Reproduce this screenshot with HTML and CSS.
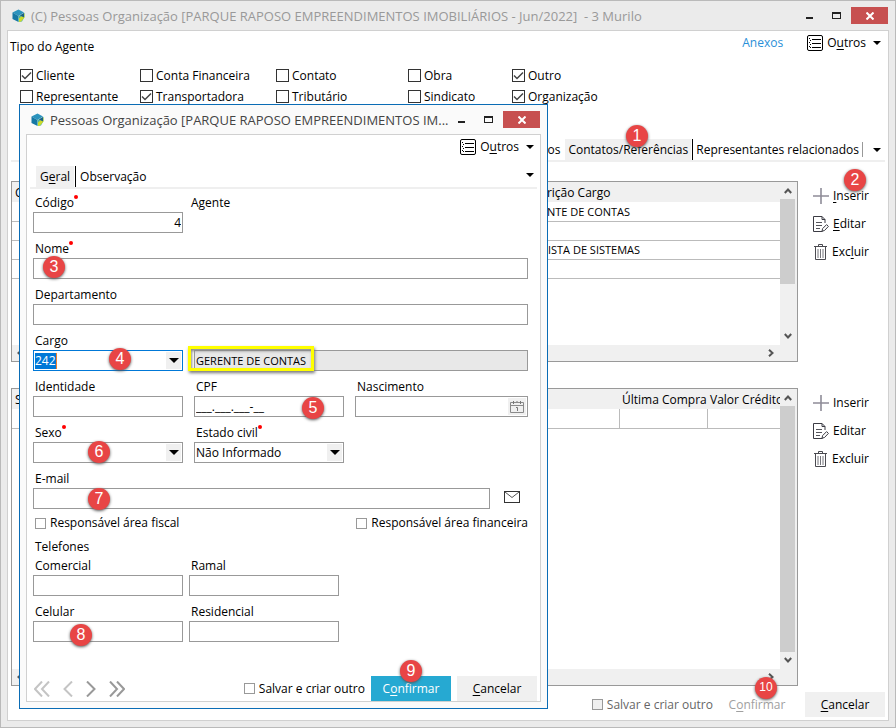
FILE: index.html
```
<!DOCTYPE html>
<html lang="pt-BR">
<head>
<meta charset="utf-8">
<title>Pessoas Organização</title>
<link rel="stylesheet" href="styles.css">
</head>
<body>
<svg class="defs" aria-hidden="true">
  <symbol id="logo" viewBox="0 0 13 14">
    <path d="M6.500 0.500 12 3.500 6.500 7 0.500 3.500z" fill="#2b93bd"/>
    <path d="M0.500 3.500 6.500 7V13L0.500 10z" fill="#1678a4"/>
    <path d="M12.500 3.800V8L10 12.500 6.500 13V7z" fill="#4fb3a0"/>
    <path d="M12.500 4.500V8.500L9 12.500 7 13V9.500z" fill="#cddc29"/>
    <path d="M8 6.500 12 4V8.500z" fill="#1c5f86"/>
  </symbol>
  <symbol id="list" viewBox="0 0 16 16">
    <rect x="0.500" y="0.500" width="15" height="15" rx="1.500" fill="none" stroke="#000"/>
    <path d="M5 4.500h9M5 8.500h9M5 12.500h9M2 3.500h1M2 7.500h1M2 11.500h1M3 5.500h1M3 9.500h1M3 12.500h1" stroke="#000" fill="none"/>
  </symbol>
  <symbol id="plus" viewBox="0 0 16 16">
    <path d="M8 0v16M0 8h16" stroke="#8e8c98" stroke-width="1.600" fill="none"/>
  </symbol>
  <symbol id="edit" viewBox="0 0 16 16">
    <path d="M9.500 15.500H0.500V0.500H9L12 3.500V7M9 0.500V3.500H12" stroke="#3c3c44" fill="none"/>
    <path d="M3 6.500h6M3 9.500h6M3 12.500h4" stroke="#55555c" fill="none"/>
    <path d="M9 15.200 9.600 12.600 13.600 8.600 15.400 10.400 11.500 14.500z" stroke="#3c3c44" fill="#fff"/>
  </symbol>
  <symbol id="trash" viewBox="0 0 13 16">
    <path d="M0 2.500h13M4.500 2V0.500h4V2M1.500 3V15.500h10V3" stroke="#4a4a50" fill="none"/>
    <path d="M4 5v9M6.500 5v9M9 5v9" stroke="#77777d" fill="none"/>
  </symbol>
  <symbol id="chev" viewBox="0 0 8 6">
    <path d="M0.800 5 4 1.500 7.200 5" stroke="#555" stroke-width="2" fill="none"/>
  </symbol>
  <symbol id="next" viewBox="0 0 10 16">
    <path d="M1 0.500 8.500 8 1 15.500" stroke="currentColor" stroke-width="2" fill="none"/>
  </symbol>
  <symbol id="last" viewBox="0 0 16 16">
    <path d="M1 0.500 8 8 1 15.500M8 0.500 15 8 8 15.500" stroke="currentColor" stroke-width="2" fill="none"/>
  </symbol>
  <symbol id="calendar" viewBox="0 0 14 12">
    <path d="M0.500 1.500h13v10H0.500zM0.500 4.500h13" stroke="#8a8a8a" fill="none"/>
    <path d="M3.500 0v3M7 0v1M10.500 0v3M6 6.500h1.500V10" stroke="#777" fill="none"/>
  </symbol>
  <symbol id="mail" viewBox="0 0 16 12">
    <rect x="0.500" y="0.500" width="15" height="11" fill="none" stroke="#333"/>
    <path d="M1 1 8 6.500 15 1" stroke="#555" fill="none"/>
  </symbol>
</svg>

<main class="window">
  <header class="titlebar">
    <svg class="logo"><use href="#logo"/></svg>
    <h1 class="title">(C) Pessoas Organização [PARQUE RAPOSO EMPREENDIMENTOS IMOBILIÁRIOS - Jun/2022] &nbsp;- 3 Murilo</h1>
    <div class="winbtns">
      <button class="min" aria-label="Minimizar"></button>
      <button class="max" aria-label="Maximizar"></button>
      <button class="close" aria-label="Fechar"><svg viewBox="0 0 8 8"><path d="M0.500 0.500 7.500 7.500M7.500 0.500 0.500 7.500"/></svg></button>
    </div>
  </header>

  <div class="content">
    <div class="toprow">
      <h2 class="group">Tipo do Agente</h2>
      <a class="anexos" href="#">Anexos</a>
      <button class="outros"><svg><use href="#list"/></svg><span>O<u>u</u>tros</span><i class="caret"></i></button>
    </div>

    <div class="types">
      <label><input type="checkbox" checked>Cliente</label>
      <label><input type="checkbox">Conta Financeira</label>
      <label><input type="checkbox">Contato</label>
      <label><input type="checkbox">Obra</label>
      <label><input type="checkbox" checked>Outro</label>
      <label><input type="checkbox">Representante</label>
      <label><input type="checkbox" checked>Transportadora</label>
      <label><input type="checkbox">Tributário</label>
      <label><input type="checkbox">Sindicato</label>
      <label><input type="checkbox" checked>Organização</label>
    </div>

    <nav class="tabs tabs-main">
      <button class="tab">os</button>
      <button class="tab active">Contatos/Referências</button>
      <button class="tab">Representantes relacionados</button>
      <span class="sep"></span>
      <i class="caret"></i>
    </nav>

    <section class="block block-contacts">
      <div class="grid-box">
        <div class="grid-view">
          <table>
            <colgroup><col class="c-code"><col></colgroup>
            <thead><tr><th>C</th><th>Descrição Cargo</th></tr></thead>
            <tbody>
              <tr><td></td><td>GERENTE DE CONTAS</td></tr>
              <tr><td></td><td></td></tr>
              <tr><td></td><td>ANALISTA DE SISTEMAS</td></tr>
              <tr><td></td><td></td></tr>
            </tbody>
          </table>
        </div>
        <div class="vbar"><svg><use href="#chev"/></svg><span class="thumb short"></span><svg class="down"><use href="#chev"/></svg></div>
        <div class="hbar"><svg class="left"><use href="#chev"/></svg><svg class="right"><use href="#chev"/></svg></div>
      </div>
      <div class="actions">
        <button><svg class="i16"><use href="#plus"/></svg><span><u>I</u>nserir</span></button>
        <button><svg class="i16"><use href="#edit"/></svg><span><u>E</u>ditar</span></button>
        <button><svg class="i13"><use href="#trash"/></svg><span>Exc<u>l</u>uir</span></button>
      </div>
    </section>

    <section class="block block-refs">
      <div class="grid-box">
        <div class="grid-view">
          <table class="lined">
            <colgroup><col class="c-rest"><col class="c-date"><col></colgroup>
            <thead><tr><th>S</th><th>Última Compra</th><th>Valor Crédito</th></tr></thead>
            <tbody><tr><td></td><td></td><td></td></tr></tbody>
          </table>
        </div>
        <div class="vbar"><svg><use href="#chev"/></svg><span class="thumb"></span><svg class="down"><use href="#chev"/></svg></div>
        <div class="hbar"><svg class="left"><use href="#chev"/></svg><svg class="right"><use href="#chev"/></svg></div>
      </div>
      <div class="actions">
        <button><svg class="i16"><use href="#plus"/></svg><span>Inserir</span></button>
        <button><svg class="i16"><use href="#edit"/></svg><span>Editar</span></button>
        <button><svg class="i13"><use href="#trash"/></svg><span>Excluir</span></button>
      </div>
    </section>

    <footer class="foot">
      <label class="small dim"><input type="checkbox" disabled>Salvar e criar outro</label>
      <button class="btn flat" disabled>C<u>o</u>nfirmar</button>
      <button class="btn"><u>C</u>ancelar</button>
    </footer>
  </div>
  <span class="mark m1">1</span>
  <span class="mark m2">2</span>
  <span class="mark m10">10</span>
</main>

<div class="dialog" role="dialog" aria-labelledby="dlg-title">
  <header class="titlebar">
    <svg class="logo"><use href="#logo"/></svg>
    <h2 class="title" id="dlg-title">Pessoas Organização [PARQUE RAPOSO EMPREENDIMENTOS IM...</h2>
    <div class="winbtns">
      <button class="min" aria-label="Minimizar"></button>
      <button class="max" aria-label="Maximizar"></button>
      <button class="close" aria-label="Fechar"><svg viewBox="0 0 8 8"><path d="M0.500 0.500 7.500 7.500M7.500 0.500 0.500 7.500"/></svg></button>
    </div>
  </header>
  <form class="content">
    <div class="toprow">
      <button type="button" class="outros"><svg><use href="#list"/></svg><span>O<u>u</u>tros</span><i class="caret"></i></button>
    </div>
    <nav class="tabs">
      <button type="button" class="tab active">G<u>e</u>ral</button>
      <button type="button" class="tab">Observação</button>
      <i class="caret"></i>
    </nav>

    <div class="fields">
      <div class="row">
        <div class="field"><label class="req" for="codigo">Código</label><input id="codigo" class="num" value="4"></div>
        <div class="agent">Agente</div>
      </div>
      <div class="field"><label class="req" for="nome">Nome</label><input id="nome"></div>
      <div class="field"><label for="depto">Departamento</label><input id="depto"></div>
      <div class="row">
        <div class="field"><label for="cargo">Cargo</label>
          <div class="combo focus"><span class="picked">242</span><input id="cargo" aria-label="Cargo"><button type="button" aria-label="Abrir lista"><i class="caret"></i></button></div>
        </div>
        <div class="field wide2 cargo-desc"><input class="ro" aria-label="Descrição do cargo" value="GERENTE DE CONTAS" readonly><span class="hl"></span></div>
      </div>
      <div class="row">
        <div class="field"><label for="ident">Identidade</label><input id="ident"></div>
        <div class="field"><label for="cpf">CPF</label><input id="cpf" value="___.___.___-__"></div>
        <div class="field"><label for="nasc">Nascimento</label>
          <div class="combo"><input id="nasc"><button type="button" class="cal" aria-label="Calendário"><svg><use href="#calendar"/></svg></button></div>
        </div>
      </div>
      <div class="row">
        <div class="field"><label class="req" for="sexo">Sexo</label><div class="combo"><select id="sexo"><option></option></select><span class="drop"><i class="caret"></i></span></div></div>
        <div class="field"><label class="req" for="civil">Estado civil</label><div class="combo"><select id="civil"><option>Não Informado</option></select><span class="drop"><i class="caret"></i></span></div></div>
      </div>
      <div class="mailrow">
        <div class="field"><label for="email">E-mail</label><input id="email"></div>
        <button type="button" class="mail" aria-label="Enviar e-mail"><svg><use href="#mail"/></svg></button>
      </div>
      <div class="resp">
        <label class="small"><input type="checkbox">Responsável área fiscal</label>
        <label class="small"><input type="checkbox">Responsável área financeira</label>
      </div>
      <h3 class="phones">Telefones</h3>
      <div class="phone-grid">
        <div class="field"><label for="com">Comercial</label><input id="com"></div>
        <div class="field"><label for="ramal">Ramal</label><input id="ramal"></div>
        <div class="field"><label for="cel">Celular</label><input id="cel"></div>
        <div class="field"><label for="res">Residencial</label><input id="res"></div>
      </div>
    </div>

    <footer class="foot">
      <div class="nav">
        <button type="button" aria-label="Primeiro" class="off"><svg class="i16 flip"><use href="#last"/></svg></button>
        <button type="button" aria-label="Anterior" class="off"><svg class="i10 flip"><use href="#next"/></svg></button>
        <button type="button" aria-label="Próximo"><svg class="i10"><use href="#next"/></svg></button>
        <button type="button" aria-label="Último"><svg class="i16"><use href="#last"/></svg></button>
      </div>
      <label class="small"><input type="checkbox">Salvar e criar outro</label>
      <button type="button" class="btn primary">C<u>o</u>nfirmar</button>
      <button type="button" class="btn"><u>C</u>ancelar</button>
    </footer>
  </form>
  <span class="mark m3">3</span>
  <span class="mark m4">4</span>
  <span class="mark m5">5</span>
  <span class="mark m6">6</span>
  <span class="mark m7">7</span>
  <span class="mark m8">8</span>
  <span class="mark m9">9</span>
</div>
</body>
</html>
```
FILE: styles.css
```
* { box-sizing: border-box; }
body {
  margin: 0;
  position: relative;
  font: 12px/16px "Open Sans", "Noto Sans", sans-serif;
  color: #000;
}
.defs { position: absolute; width: 0; height: 0; }
svg { display: block; flex: none; }
button, input, select { font: inherit; color: inherit; margin: 0; padding: 0; border: 0; background: none; border-radius: 0; }
h1, h2, h3 { margin: 0; font: inherit; }
u { text-decoration: underline; text-underline-offset: 2px; }
.i16 { width: 16px; height: 16px; }
.i13 { width: 13px; height: 16px; }
.i10 { width: 10px; height: 16px; }

/* Window frames */
.window {
  position: relative;
  display: flex;
  flex-direction: column;
  min-height: 100vh;
  border: 1px solid #bababa;
  background: #ebebeb;
  padding: 0 6px 6px;
}
.titlebar { display: flex; align-items: center; height: 29px; flex: none; }
.logo { width: 13px; height: 14px; margin: 0 6px 0 5px; }
.title { font-size: 13px; color: #999; white-space: nowrap; flex: 1; min-width: 0; overflow: hidden; }
.winbtns { display: flex; align-items: center; margin-right: 1px; }
.winbtns .min { width: 7px; height: 2px; background: #222; margin: 5px 19px 0 0; }
.winbtns .max { width: 9px; height: 7px; border: 1px solid #222; border-top-width: 2px; margin-right: 10px; }
.winbtns .close { width: 37px; height: 17px; background: #c75050; display: grid; place-items: center; }
.close svg { width: 8px; height: 8px; stroke: #fff; stroke-width: 2; }
.content {
  flex: 1;
  display: flex;
  flex-direction: column;
  background: #fff;
  border: 1px solid #d0d0d0;
}

.toprow { display: flex; height: 34px; padding: 0 7px 0 2px; flex: none; }
.group { flex: 1; padding-top: 8px; }
.anexos { color: #2a8fd8; text-decoration: none; padding-top: 4px; margin-right: 24px; }
.outros { display: flex; align-items: center; height: 24px; }
.outros svg { width: 16px; height: 16px; margin-right: 4px; }
.outros .caret { margin-left: 7px; }
.caret { display: block; flex: none; width: 0; border: 4px solid transparent; border-top-color: #000; border-bottom: 0; }

/* Check boxes */
input[type="checkbox"] { appearance: none; flex: none; width: 13px; height: 13px; border: 1px solid #333; background: #fff; margin-right: 3px; }
input[type="checkbox"]:checked {
  background: #fff url("data:image/svg+xml,%3Csvg xmlns='http://www.w3.org/2000/svg' viewBox='0 0 11 11'%3E%3Cpath d='M1 5.500 4 8.500 10 2.500' fill='none' stroke='%23444' stroke-width='1.500'/%3E%3C/svg%3E") center / 11px 11px no-repeat;
}
.types { display: grid; grid-template-columns: 120px 136px 132px 104px 1fr; grid-auto-rows: 21px; padding-left: 12px; }
.types label { display: flex; align-items: center; }
.small { display: flex; align-items: center; }
.small input[type="checkbox"] { width: 11px; height: 11px; border-color: #999; margin-right: 4px; }
.dim { color: #666; }
.dim input[type="checkbox"] { background: #f0f0f0; }

/* Tabs */
.tabs { display: flex; align-items: stretch; height: 23px; border-bottom: 2px solid #efefef; margin: 0 3px; flex: none; }
.tab { padding: 0 4px; }
.tab.active { background: #f0f0f0; box-shadow: 1px 0 #fff, 2px 0 #000; margin-right: 2px; }
.tabs .caret { align-self: center; margin-left: auto; }
.tabs-main { margin-top: 32px; justify-content: flex-end; }
.tabs-main .tab { padding: 0 3px; }
.tabs-main .sep { width: 1px; margin: 3px 10px 3px 0; background: #999; }
.tabs-main .caret { margin: 0 4px 0 0; }
.tabs-main .active { margin-left: 2px; }

/* Record grids */
.block { display: flex; margin-left: 3px; }
.block-contacts { margin-top: 19px; height: 181px; }
.block-refs { margin-top: 26px; flex: 1; min-height: 200px; }
.grid-box {
  flex: 1;
  min-width: 0;
  display: grid;
  grid-template: "view vbar" 1fr "hbar corner" 16px / 1fr 17px;
  border: 1px solid #999;
  background: #f0f0f0;
}
.grid-view { background: #fff; overflow: hidden; }
table { table-layout: fixed; width: 100%; border-collapse: collapse; }
th, td { height: 19px; padding: 0 3px; text-align: left; font: inherit; line-height: 17px; white-space: nowrap; border-bottom: 1px solid #bbb; }
td { font-size: 11px; }
th { background: #f0f0f0; border: 0; height: 20px; }
.c-code { width: 505px; }
.c-rest { width: 607px; }
.c-date { width: 88px; }
.lined td + td { border-left: 1px solid #bbb; }
.vbar { display: flex; flex-direction: column; align-items: center; padding: 6px 2px 6px 0; gap: 5px; }
.vbar svg, .hbar svg { width: 8px; height: 6px; }
.vbar .down { transform: rotate(180deg); margin-top: auto; }
.thumb { width: 15px; background: #cdcdcd; flex: 1; }
.thumb.short { flex: 0 0 85px; }
.hbar { grid-area: hbar; display: flex; justify-content: space-between; align-items: center; padding: 0 5px 0 4px; }
.hbar .left { transform: rotate(-90deg); }
.hbar .right { transform: rotate(90deg); }
.actions { width: 90px; padding: 1px 0 0 15px; display: flex; flex-direction: column; flex: none; }
.actions button { display: flex; align-items: center; gap: 4px; height: 28px; }
.actions .i13 { margin: 0 1px; }

/* Footers */
.foot { display: flex; align-items: center; justify-content: flex-end; gap: 6px; padding: 6px 3px 3px 0; flex: none; }
.btn { width: 80px; height: 25px; background: #f0f0f0; flex: none; }
.btn.flat { background: none; color: #a0a0a0; width: 76px; margin-right: 4px; }
.btn.primary { background: #26a9d2; color: #fff; }

/* Dialog over the main window */
.dialog {
  position: absolute;
  left: 19px;
  right: 348px;
  top: 104px;
  bottom: 19px;
  display: flex;
  flex-direction: column;
  border: 1px solid #0a6cb5;
  background: #fafafa;
  padding: 0 6px 6px;
}
.dialog .title { color: #444; }
.dialog .toprow { justify-content: flex-end; height: 31px; padding-right: 6px; }
.dialog .caret { margin-right: 0; }
.dialog .tabs { padding: 0 3px 0 6px; }
.dialog .tabs .caret { margin-bottom: 4px; }
.dialog .foot { padding: 0 3px 0 7px; }
.fields { display: flex; flex-direction: column; gap: 8px; padding: 6px 12px 0 6px; flex: 1; }
.row { display: grid; grid-template-columns: 150px 150px 1fr; column-gap: 11px; align-items: end; }
.field { display: flex; flex-direction: column; gap: 1px; min-width: 0; position: relative; }
.field label { padding-left: 2px; align-self: flex-start; }
.field > input, .combo { width: 100%; height: 21px; border: 1px solid #999; background: #fff; padding: 0 1px; }
.req::after { content: ""; display: inline-block; width: 4px; height: 4px; border-radius: 2px; background: #f00; vertical-align: 8px; }
.num { text-align: right; }
.agent { align-self: start; margin-left: -3px; }
.wide2 { grid-column: span 2; }
.field > input.ro { background: #e8e8e8; font-size: 11px; }
.hl { position: absolute; left: -6px; top: -4px; width: 126px; height: 25px; border: 3px solid #ff0; box-shadow: 1px 2px 3px #777, inset 1px 2px 3px #888; }
.combo { display: flex; align-items: center; }
.combo input, .combo select { flex: 1; min-width: 0; height: 19px; appearance: none; outline: 0; }
.combo button, .drop { width: 15px; height: 17px; background: #f0f0f0; display: grid; place-items: center; flex: none; }
.combo .caret, .drop .caret { border-width: 5px 5px 0; }
.combo .cal { width: 18px; }
.cal svg { width: 14px; height: 12px; }
.focus { border-color: #0078d7; }
.picked { background: #0078d7; color: #fff; border-right: 1px solid #f08030; }
.mailrow { display: grid; grid-template-columns: 1fr 38px; align-items: end; }
.mail { height: 24px; justify-self: center; margin-left: 6px; }
.mail svg { width: 16px; height: 12px; }
.resp { display: flex; justify-content: space-between; padding-left: 2px; margin: -2px 0; }
.phones { padding-left: 2px; margin: 2px 0 -5px; }
.phone-grid { display: grid; grid-template-columns: 150px 150px; gap: 8px 6px; }
.nav { display: flex; gap: 13px; margin-right: auto; }
.nav button { color: #999; }
.nav .off { color: #c4c4c4; }
.flip { transform: scaleX(-1); }

/* Numbered call-outs */
.mark {
  position: absolute;
  width: 22px;
  height: 22px;
  border-radius: 50%;
  background: #e84545;
  color: #fff;
  font: 16px/21px "Liberation Sans", sans-serif;
  text-align: center;
  box-shadow: 0 1px 3px #555;
}
.m1 { left: 625px; top: 124px; }
.m2 { left: 843px; top: 168px; }
.m10 { left: 754px; top: 676px; font-size: 12px; }
.m3 { left: 23px; top: 151px; }
.m4 { left: 89px; top: 243px; }
.m5 { left: 282px; top: 292px; }
.m6 { left: 68px; top: 336px; }
.m7 { left: 68px; top: 383px; }
.m8 { left: 50px; top: 519px; }
.m9 { left: 380px; top: 555px; }
```
